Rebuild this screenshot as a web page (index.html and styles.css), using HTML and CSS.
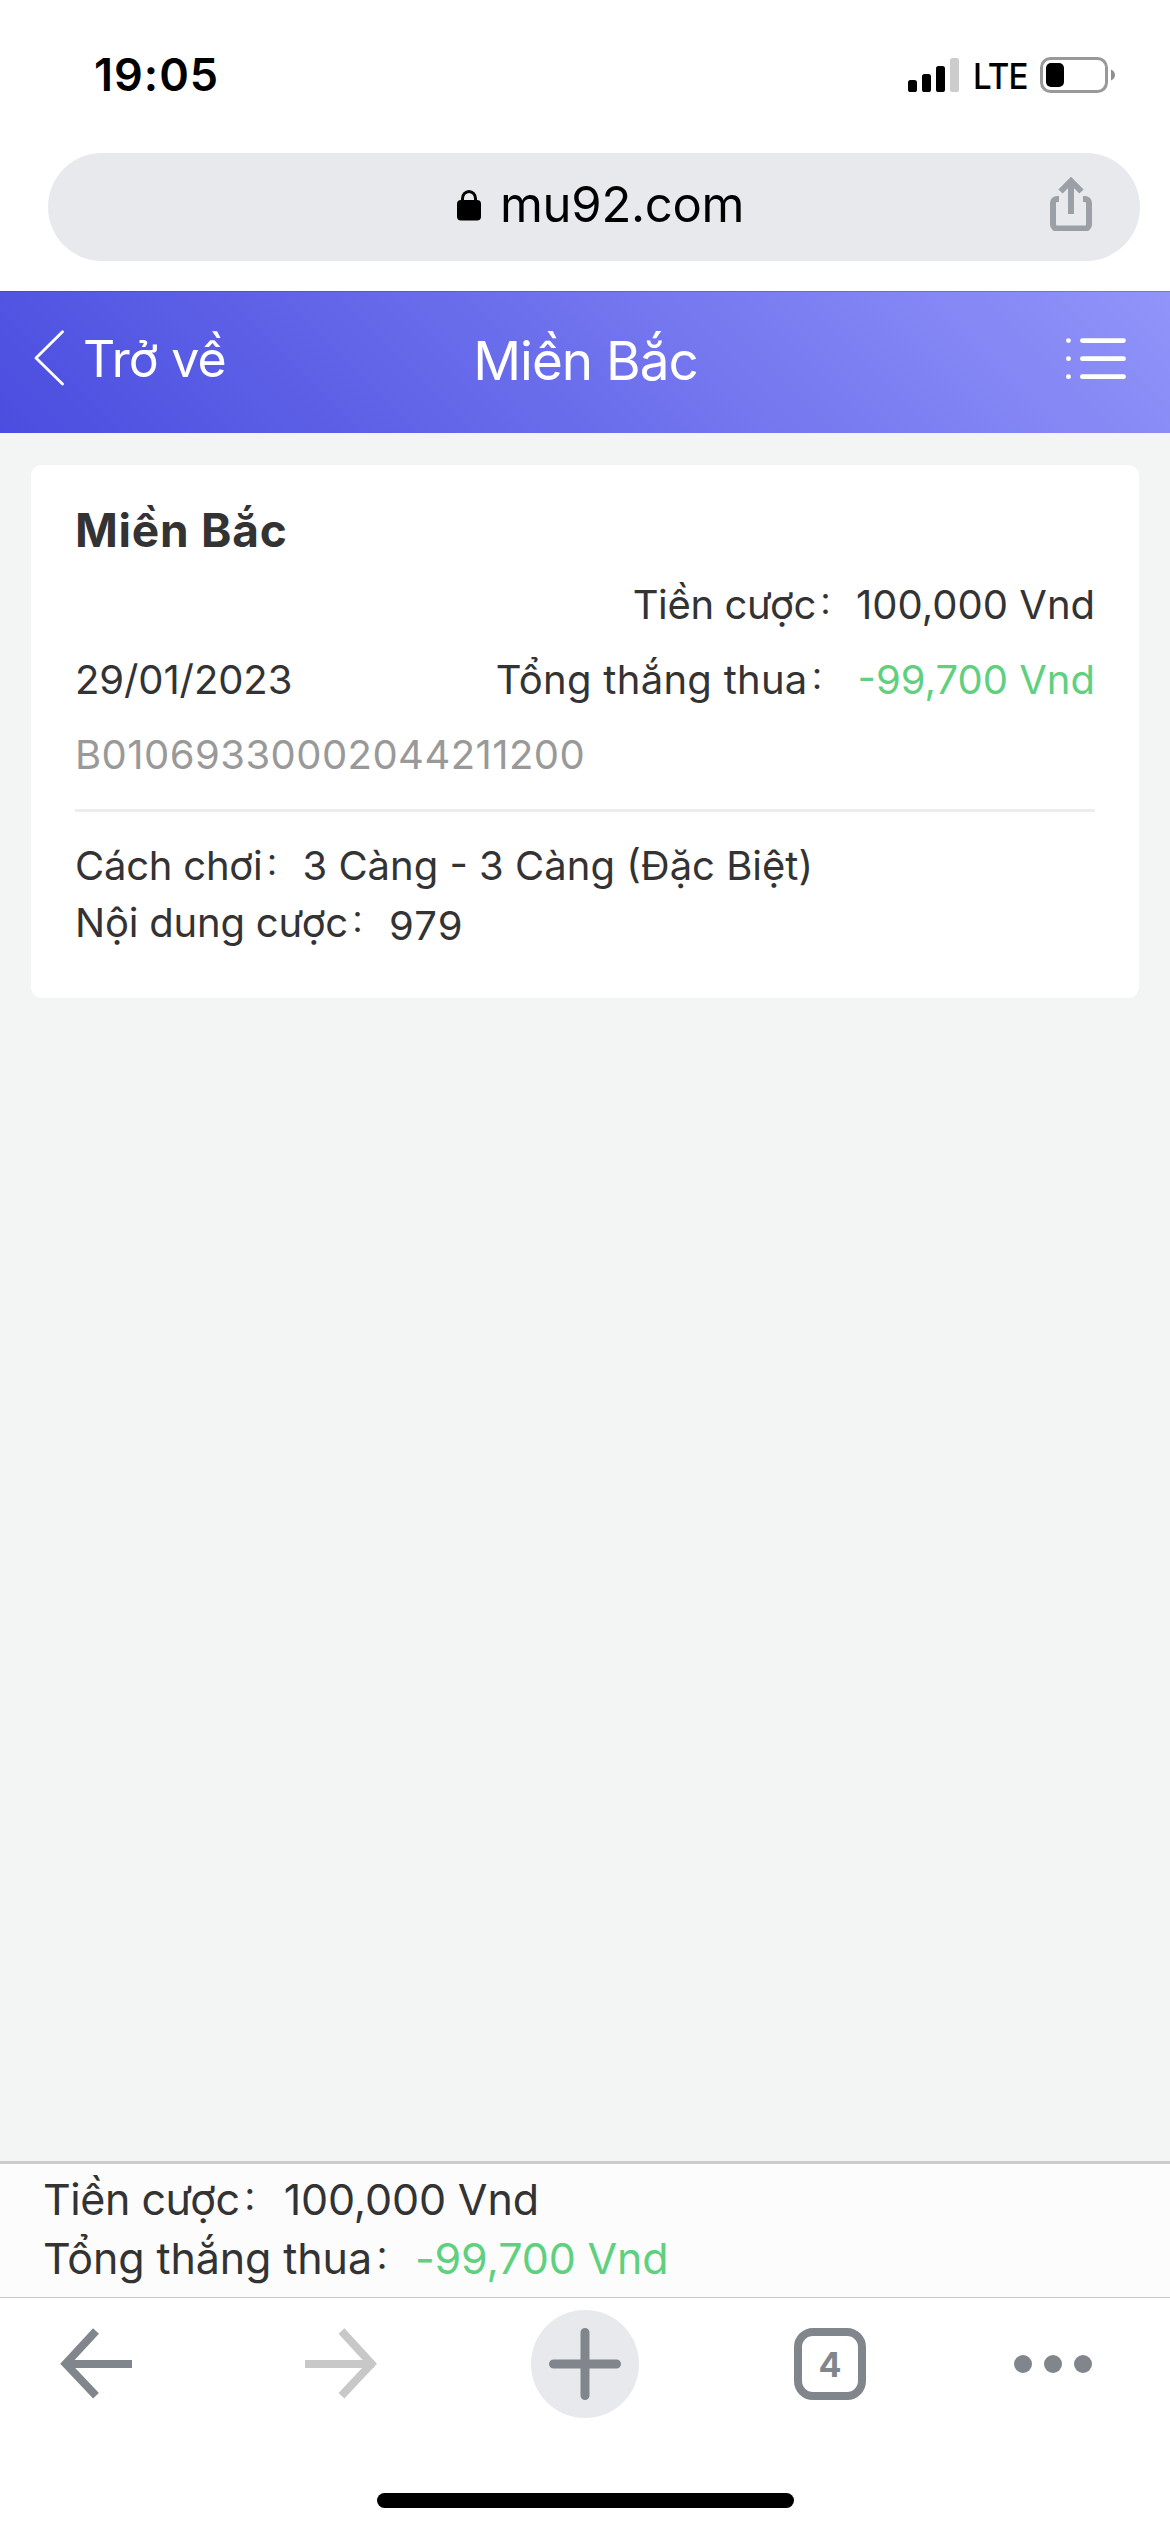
FILE: index.html
```html
<!DOCTYPE html>
<html lang="vi">
<head>
<meta charset="utf-8">
<title>Miền Bắc</title>
<link rel="stylesheet" href="styles.css">
</head>
<body>
<div class="screen">
  <div class="status-bar">
    <span class="clock">19:05</span>
    <div class="status-icons">
      <svg class="signal" width="51" height="34" viewBox="0 0 51 34">
        <rect x="0" y="22" width="9" height="12" rx="2.6"/>
        <rect x="14" y="16" width="9" height="18" rx="2.6"/>
        <rect x="28" y="8" width="9" height="26" rx="2.6"/>
        <rect x="42" y="0" width="9" height="34" rx="2.6" fill="#ccc"/>
      </svg>
      <span class="network">LTE</span>
      <svg class="battery" width="75" height="36" viewBox="0 0 75 36">
        <rect x="1.5" y="1.5" width="65" height="33" rx="9" fill="none" stroke="#999" stroke-width="3"/>
        <rect x="6" y="6" width="18" height="24" rx="5"/>
        <path d="M71 12.5c2.500 1 4 3 4 5.500s-1.500 4.500-4 5.500z" fill="#8e8e8e"/>
      </svg>
    </div>
  </div>

  <div class="address-bar">
    <svg class="lock" width="24" height="31" viewBox="0 0 24 31">
      <path d="M5.500 12V8.500a6.500 7 0 0 1 13 0V12" fill="none" stroke="#000" stroke-width="3"/>
      <rect x="0" y="10" width="24" height="20.500" rx="4"/>
    </svg>
    <span class="host">mu92.com</span>
    <svg class="share" width="42" height="54" viewBox="0 0 42 54" fill="none" stroke="#9aa0a6" stroke-width="6">
      <path d="M9 22H7a4 4 0 0 0-4 4v21.500a4 4 0 0 0 4 4h28a4 4 0 0 0 4-4V26a4 4 0 0 0-4-4h-2"/>
      <path d="M21 37V5M10.500 14.500L21 4l10.500 10.500"/>
    </svg>
  </div>

  <header class="page-header">
    <a class="back">
      <svg width="30" height="56" viewBox="0 0 30 56" fill="none" stroke="#fff" stroke-width="2.800" stroke-linecap="round" stroke-linejoin="round">
        <path d="M28.500 1.800L2 28l26.500 26"/>
      </svg>
      <span>Trở về</span>
    </a>
    <h1>Miền Bắc</h1>
    <svg class="menu" width="60" height="42" viewBox="0 0 60 42" fill="none" stroke="#fff" stroke-width="4.800" stroke-linecap="round">
      <path d="M16.400 2.600H57.500M16.400 20.700H57.500M16.400 38.700H57.500M2.400 2.600h.1M2.400 20.700h.1M2.400 38.700h.1"/>
    </svg>
  </header>

  <main class="content">
    <section class="card">
      <h2>Miền Bắc</h2>
      <div class="row end">
        <span class="stake-label">Tiền cược<i class="colon">：</i></span>
        <span>100,000 Vnd</span>
      </div>
      <div class="row">
        <span class="date">29/01/2023</span>
        <span class="result-label">Tổng thắng thua<i class="colon">：</i></span>
        <span class="loss">-99,700 Vnd</span>
      </div>
      <div class="row ticket">B01069330002044211200</div>
      <div class="details">
        <div class="detail"><span class="play-label">Cách chơi<i class="colon">：</i></span><span>3 Càng - 3 Càng (Đặc Biệt)</span></div>
        <div class="detail"><span class="bet-label">Nội dung cược<i class="colon">：</i></span><span class="numbers">979</span></div>
      </div>
    </section>
  </main>

  <footer class="totals">
    <div class="total"><span class="stake-label">Tiền cược<i class="colon">：</i></span><span>100,000 Vnd</span></div>
    <div class="total"><span class="sum-label">Tổng thắng thua<i class="colon">：</i></span><span class="loss">-99,700 Vnd</span></div>
  </footer>

  <nav class="toolbar">
    <svg class="tool" width="108" height="108" viewBox="0 0 108 108" fill="none" stroke="#80868b" stroke-width="8">
      <path d="M86 54H18M50 21L19.700 53.700l30.300 32"/>
    </svg>
    <svg class="tool" width="108" height="108" viewBox="0 0 108 108" fill="none" stroke="#c8c8c8" stroke-width="8">
      <path d="M25 54H94M61.500 21L91.500 53.700 61.500 85.700"/>
    </svg>
    <svg class="tool" width="108" height="108" viewBox="0 0 108 108">
      <circle cx="54" cy="54" r="54" fill="#e8e9ed"/>
      <path d="M54 22.500v63M22.500 54h63" stroke="#80868b" stroke-width="9" stroke-linecap="round"/>
    </svg>
    <div class="tool tabs"><span>4</span></div>
    <svg class="tool" width="108" height="108" viewBox="0 0 108 108" fill="#80868b">
      <circle cx="24" cy="54" r="9"/><circle cx="54" cy="54" r="9"/><circle cx="84" cy="54" r="9"/>
    </svg>
  </nav>
  <div class="home-area"><div class="home-indicator"></div></div>
</div>
</body>
</html>
```
FILE: styles.css
```css
* {
  box-sizing: border-box;
}

body {
  margin: 0;
  background: #fff;
  color: #333;
  font-family: Inter, "Liberation Sans", sans-serif;
}

svg {
  display: block;
  flex: none;
}

h1,
h2 {
  margin: 0;
}

.screen {
  width: 1170px;
  height: 2532px;
  display: flex;
  flex-direction: column;
  overflow: hidden;
}

/* Status bar */
.status-bar {
  height: 153px;
  padding: 0 55px 4px 94px;
  display: flex;
  align-items: center;
  justify-content: space-between;
  color: #000;
}

.clock {
  font-size: 45px;
  font-weight: 600;
  letter-spacing: 1px;
}

.status-icons {
  display: flex;
  align-items: center;
}

.network {
  width: 52px;
  margin: 3px 15px 0 14px;
  font-size: 36px;
  line-height: 36px;
  font-weight: 500;
  letter-spacing: -1px;
  transform: scaleX(0.92);
  transform-origin: left;
}

/* Address bar */
.address-bar {
  flex: none;
  height: 108px;
  margin: 0 30px 30px 48px;
  padding: 0 48px 0 409px;
  border-radius: 54px;
  background: #e8e9ed;
  display: flex;
  align-items: center;
  color: #000;
}

.lock {
  margin-top: -3px;
}

.host {
  margin: -6px auto 0 19px;
  font-size: 49px;
  letter-spacing: -0.3px;
}

.share {
  margin-top: -6px;
}

/* Page header */
.page-header {
  flex: none;
  height: 142px;
  padding: 0 44px 0 34px;
  border-top: 1px solid rgba(60, 60, 67, 0.29);
  background: linear-gradient(45deg, #4a4ddf, #9194f9) border-box;
  color: #fff;
  display: grid;
  grid-template-columns: 1fr auto 1fr;
  align-items: center;
}

.back {
  display: flex;
  align-items: center;
  gap: 19px;
  margin-top: -9px;
  font-size: 50px;
  letter-spacing: -0.8px;
}

.back span {
  margin-top: 1px;
}

.page-header h1 {
  font-size: 53px;
  font-weight: 400;
  letter-spacing: -1px;
  margin: -4px 0 0 11px;
}

.menu {
  justify-self: end;
  margin-top: -8px;
}

/* Bet card */
.content {
  flex: 1;
  padding: 32px 31px;
  background: #f3f5f4;
}

.card {
  height: 533px;
  padding: 28px 44px;
  border-radius: 11px;
  background: #fff;
  font-size: 40px;
}

.card h2 {
  line-height: 74px;
  font-size: 46px;
  font-weight: 700;
  letter-spacing: 0.75px;
}

.row {
  display: flex;
  line-height: 75px;
}

.row.end {
  justify-content: flex-end;
}

.date {
  margin-right: auto;
  letter-spacing: -0.1px;
}

.colon {
  display: inline-block;
  width: 1.333em;
  padding-left: 2px;
  font: 0.75em/0 "Noto Sans CJK SC", sans-serif;
  letter-spacing: 0;
  vertical-align: 6px;
}

.stake-label {
  letter-spacing: -0.36px;
}

.result-label {
  letter-spacing: 0.28px;
  margin-right: 10px;
}

.loss {
  color: #5fd07f;
}

.ticket {
  color: #999;
  letter-spacing: 0.45px;
}

.details {
  margin-top: 17px;
  padding-top: 25px;
  border-top: 3px solid #ededed;
}

.detail {
  display: flex;
  line-height: 57px;
}

.play-label {
  letter-spacing: -0.23px;
}

.bet-label {
  letter-spacing: -0.2px;
}

.numbers {
  margin: 3px 0 -3px 1px;
  letter-spacing: 1.2px;
}

/* Totals */
.totals {
  flex: none;
  height: 137px;
  padding: 6px 43px 0;
  border-top: 3px solid #ccc;
  border-bottom: 1px solid #c8c8c8;
  background: #fcfcfc;
  font-size: 43px;
}

.total {
  display: flex;
  line-height: 59px;
  letter-spacing: -0.15px;
}

.total .stake-label {
  margin-right: 1px;
  letter-spacing: -0.45px;
}

.sum-label {
  letter-spacing: -0.11px;
}

/* Browser toolbar */
.toolbar {
  flex: none;
  height: 120px;
  padding: 12px 63px 0 46px;
  display: flex;
}

.toolbar .tool:nth-child(2) {
  margin-left: 126px;
}

.toolbar .tool:nth-child(3) {
  margin-left: 143px;
}

.tabs {
  width: 72px;
  height: 72px;
  margin: 18px 0 0 155px;
  border: 8px solid #80868b;
  border-radius: 19px;
  display: flex;
  align-items: center;
  justify-content: center;
  color: #80868b;
  font-size: 34px;
  font-weight: 700;
}

.toolbar .tool:last-child {
  margin-left: 133px;
}

.home-area {
  flex: none;
  height: 114px;
  display: flex;
  justify-content: center;
  align-items: flex-end;
  padding-bottom: 24px;
}

.home-indicator {
  width: 417px;
  height: 15px;
  border-radius: 8px;
  background: #000;
}
```
